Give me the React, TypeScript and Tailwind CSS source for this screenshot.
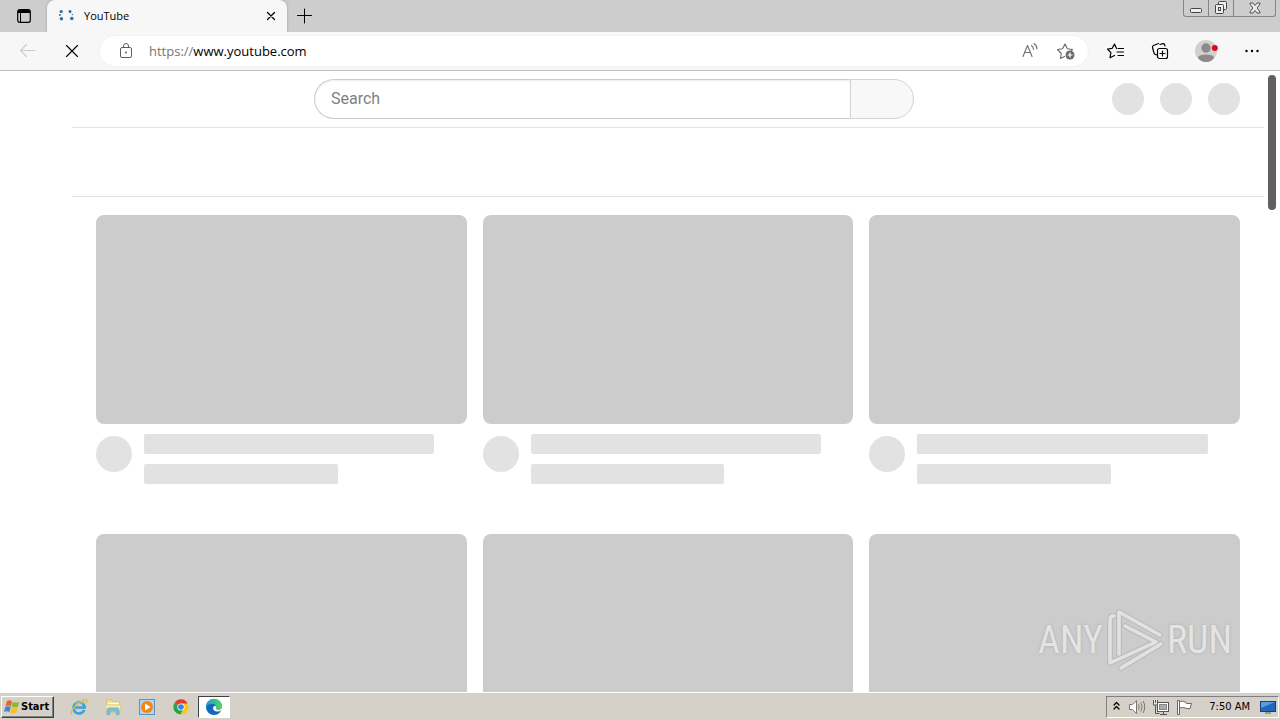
import type { ReactNode } from 'react';

const line = { fill: 'none', stroke: 'currentColor', strokeLinecap: 'round', strokeLinejoin: 'round' } as const;

function IconButton({ label, className = '', children }: { label: string; className?: string; children: ReactNode }) {
  return (
    <button type="button" aria-label={label} className={`flex shrink-0 items-center justify-center ${className}`}>
      {children}
    </button>
  );
}

function TabStrip() {
  return (
    <header className="flex h-8 shrink-0 bg-[#cdcdcd]">
      <IconButton label="Tab actions" className="w-[47px] rounded-br-md">
        <svg width="16" height="16" viewBox="0 0 16 16">
          <rect x="1.700" y="1.700" width="12.600" height="12.600" rx="2" {...line} strokeWidth="1.200" />
          <path d="M2 3.500Q2 2 3.500 2h9Q14 2 14 3.500V5H2z" />
          <path d="M4.500 5v9" {...line} strokeWidth="1" />
        </svg>
      </IconButton>
      <div className="flex w-60 items-center rounded-t-lg bg-[#f7f7f7] pr-2 pl-3 shadow-[0_0_3px_#a0a0a0]">
        <svg width="16" height="16" viewBox="0 0 16 16" fill="#2b6ea5" className="shrink-0">
          <circle cx="2.200" cy="3.500" r="1.600" />
          <circle cx=".9" cy="7" r="1" />
          <circle cx="2.400" cy="10.800" r="1.700" />
          <circle cx="11" cy="3.500" r="1.500" />
          <circle cx="13.300" cy="6.500" r=".7" />
          <circle cx="12.800" cy="10.500" r="1.800" />
        </svg>
        <span className="ml-[9px] flex-1 text-[11px] text-black">YouTube</span>
        <IconButton label="Close tab" className="size-4">
          <svg width="10" height="10" viewBox="0 0 10 10">
            <path d="M1.500 1.500l7 7M8.500 1.500l-7 7" {...line} strokeWidth="1.300" />
          </svg>
        </IconButton>
      </div>
      <IconButton label="New tab" className="w-9">
        <svg width="16" height="16" viewBox="0 0 16 16">
          <path d="M7.500 1v14M.5 7.500h14" {...line} strokeWidth="1" />
        </svg>
      </IconButton>
      <div className="mr-1 ml-auto flex h-[17px] rounded-b-[3px] border border-t-0 border-[#858585] text-[#444]">
        <IconButton label="Minimize" className="w-[25px] border-r border-[#858585]">
          <svg width="12" height="12" viewBox="0 0 12 12">
            <rect x=".5" y="6.500" width="11" height="4" rx="1" fill="#eee" stroke="currentColor" />
          </svg>
        </IconButton>
        <IconButton label="Restore" className="w-[25px] border-r border-[#858585]">
          <svg width="14" height="14" viewBox="0 0 14 14" fill="#eee" stroke="currentColor">
            <rect x="4.500" y=".5" width="8" height="8" rx="1" />
            <rect x="1.500" y="3.500" width="8" height="9" rx="1" />
            <rect x="4.500" y="6.500" width="2" height="3" />
          </svg>
        </IconButton>
        <IconButton label="Close window" className="w-[41px]">
          <svg width="12" height="12" viewBox="0 0 12 12" fill="#eee" stroke="currentColor" strokeWidth=".9">
            <path d="M1 1h3l2 2.600L8 1h3v1L8 6l3 4v1H8L6 8.400 4 11H1v-1l3-4-3-4z" />
          </svg>
        </IconButton>
      </div>
    </header>
  );
}

function Toolbar() {
  return (
    <div className="flex h-[39px] shrink-0 items-center border-b border-[#bdbdbd] bg-[#f7f7f7] pr-1 pl-2 text-black">
      <IconButton label="Back" className="w-10 text-[#cccccc]">
        <svg width="18" height="16" viewBox="0 0 18 16">
          <path d="M7.500 1.500L1.500 7.500l6 6M1.500 7.500H16" {...line} strokeWidth="1.100" />
        </svg>
      </IconButton>
      <IconButton label="Stop loading" className="ml-1 w-10">
        <svg width="14" height="14" viewBox="0 0 14 14">
          <path d="M1.500 1.500l11 11M12.500 1.500l-11 11" {...line} strokeWidth="1.100" />
        </svg>
      </IconButton>
      <div className="ml-2 flex h-[30px] flex-1 items-center rounded-full bg-white pr-1 pl-[18px] shadow-[0_0_2px_#e8e8e8]">
        <svg width="16" height="18" viewBox="0 0 16 18" className="shrink-0 text-[#5f5f5f]">
          <rect x="2.500" y="5.500" width="11" height="10" rx="1.500" {...line} />
          <path d="M5.500 5.500V4a2.500 2.500 0 0 1 5 0v1.500" {...line} />
          <circle cx="8" cy="10.500" r="1" fill="currentColor" />
        </svg>
        <a href="https://www.youtube.com" className="ml-[15px] flex-1 pt-0.5 text-[13px] text-black">
          <span className="text-[#767676]">https://</span>www.youtube.com
        </a>
        <IconButton label="Read aloud" className="w-9 text-[#707070]">
          <svg width="18" height="18" viewBox="0 0 18 18">
            <path d="M2 14.500L6.500 3.500 11 14.500M3.500 10.500h6M10.500 3.500q2 1.500 2 4M13 1.500q3 2 3 5.500" {...line} strokeWidth="1.100" />
          </svg>
        </IconButton>
        <IconButton label="Add to favorites" className="w-9 text-[#6a6a6a]">
          <svg width="20" height="20" viewBox="0 0 20 20">
            <path d="M8.500 15.500l-4 2 .8-5L1.500 8.500l5-.8L9 3l2.300 4.700 5.200.8-1 1" {...line} strokeWidth="1.100" />
            <circle cx="14" cy="14" r="4.500" fill="currentColor" />
            <path d="M14 11.500v5M11.500 14h5" stroke="#fff" strokeWidth="1.200" />
          </svg>
        </IconButton>
      </div>
      <div className="ml-2 flex">
        <IconButton label="Favorites" className="w-10">
          <svg width="20" height="18" viewBox="0 0 20 18">
            <path d="M10.500 6.500L8.500 2 6.200 6.300 1.500 7l3.400 3.600L4 15.700l4.500-2.200M12 6.500h5.500M11 10h6.500M12 13.500h5.500" {...line} strokeWidth="1.200" />
          </svg>
        </IconButton>
        <IconButton label="Collections" className="w-12">
          <svg width="18" height="18" viewBox="0 0 18 18">
            <rect x="6.500" y="6.500" width="10" height="10" rx="2" {...line} strokeWidth="1.200" />
            <path d="M11.500 9v5M9 11.500h5M14 4l-.5-1.500Q13 1.500 12 1.700L9 2.500M4.500 12.500q-1-.2-1.500-1.500L1.500 5.500Q1.200 4 2.500 3.500L7.500 1.500M4.500 12.500L6 13" {...line} strokeWidth="1.200" />
          </svg>
        </IconButton>
        <IconButton label="Profile" className="w-11">
          <svg width="24" height="24" viewBox="0 0 24 24">
            <circle cx="12" cy="12" r="11" fill="#d3d1cf" />
            <circle cx="12" cy="9" r="4.700" fill="#8d8b89" />
            <path d="M4 19q0-3.500 8-3.500t8 3.500q-3 4-8 4t-8-4z" fill="#8d8b89" />
            <circle cx="20.800" cy="9" r="3" fill="#d90b1c" />
          </svg>
        </IconButton>
        <IconButton label="Settings and more" className="w-12">
          <svg width="14" height="4" viewBox="0 0 14 4">
            <circle cx="1.500" cy="2" r="1.200" />
            <circle cx="7" cy="2" r="1.200" />
            <circle cx="12.500" cy="2" r="1.200" />
          </svg>
        </IconButton>
      </div>
    </div>
  );
}

function VideoPlaceholder() {
  return (
    <div className="h-[319px]">
      <div className="aspect-[371/209] rounded-lg bg-[#cccccc]" />
      <div className="mt-[10px] flex gap-3">
        <div className="mt-0.5 size-9 shrink-0 rounded-full bg-[#e2e2e2]" />
        <div className="flex flex-1 flex-col gap-[10px]">
          <div className="h-5 w-[90%] rounded-xs bg-[#e2e2e2]" />
          <div className="h-5 w-3/5 rounded-xs bg-[#e2e2e2]" />
        </div>
      </div>
    </div>
  );
}

function Page() {
  return (
    <main className="relative min-h-0 flex-1 overflow-hidden bg-white">
      <div className="flex h-14 items-center pr-10 pl-[116px]">
        <form className="flex flex-1 justify-center" onSubmit={(e) => e.preventDefault()}>
          <input
            type="text"
            aria-label="Search"
            placeholder="Search"
            className="h-10 w-full max-w-[536px] rounded-l-full border border-r-0 border-[#cccccc] bg-white px-4 pb-0.5 font-[Roboto,sans-serif] text-base text-black shadow-[inset_0_1px_2px_#eeeeee] outline-none placeholder:text-[#808080]"
          />
          <button type="submit" aria-label="Submit search" className="h-10 w-16 shrink-0 rounded-r-full border border-[#d3d3d3] bg-[#f8f8f8]" />
        </form>
        <div className="flex gap-4">
          <div className="size-8 rounded-full bg-[#e2e2e2]" />
          <div className="size-8 rounded-full bg-[#e2e2e2]" />
          <div className="size-8 rounded-full bg-[#e2e2e2]" />
        </div>
      </div>
      <div className="mr-4 ml-[72px] h-[70px] border-y border-[#e2e2e2]" />
      <div className="grid grid-cols-3 gap-x-4 pt-[18px] pr-10 pl-24">
        {[0, 1, 2, 3, 4, 5].map((n) => (
          <VideoPlaceholder key={n} />
        ))}
      </div>
      <div className="absolute top-1 right-1 h-[135px] w-2 rounded-sm bg-[#606060]" />
      <Watermark />
    </main>
  );
}

function Watermark() {
  return (
    <div className="absolute right-12 bottom-5 flex items-center gap-0.5 font-['Roboto_Condensed','Liberation_Sans_Narrow',Roboto,sans-serif] text-[38px] leading-[64px] font-normal text-[#e4e4e4] [text-shadow:0_0_3px_#a8a8a8]">
      <span>ANY</span>
      <svg width="60" height="64" viewBox="0 0 60 64" className="shrink-0">
        <g {...line} strokeWidth="6" stroke="#bdbdbd">
          <path d="M9 8q-4 0-4 4v43l46-21L20 18" />
          <path d="M14 46V4l41 23" />
          <path d="M16 60l40-24" />
        </g>
        <g {...line} strokeWidth="3.500" stroke="#e2e2e2">
          <path d="M9 8q-4 0-4 4v43l46-21L20 18" />
          <path d="M14 46V4l41 23" />
          <path d="M16 60l40-24" />
        </g>
      </svg>
      <span>RUN</span>
    </div>
  );
}

function Taskbar() {
  return (
    <footer className="flex h-7 shrink-0 items-center border-t border-white bg-[#d5d0c8] pt-px pr-px pl-px text-[11px] text-black">
      <button type="button" className="flex h-[22px] w-[53px] items-center gap-px border border-t-white border-r-[#404040] border-b-[#404040] border-l-white pl-0.5 font-['DejaVu_Sans_Condensed','DejaVu_Sans',sans-serif] font-bold shadow-[inset_-1px_-1px_#808080]">
        <svg width="16" height="16" viewBox="0 0 16 16" className="shrink-0">
          <path d="M3 2q3-1.500 5 .3L6.800 7.200Q4.500 5.700 1.600 7z" fill="#e8642c" />
          <path d="M8.700 2.700q2.800 1.700 6.600 0L13.900 7.700Q10.500 9 7.500 7.500z" fill="#86b83b" />
          <path d="M1.400 7.800Q4.500 6.500 6.600 8L5.300 13.200Q3 11.700 0 12.900z" fill="#3c88cf" />
          <path d="M7.300 8.300q2.900 1.500 6.400.1L12.300 13.700q-3 1.400-6.300-.1z" fill="#f6bd2d" />
        </svg>
        Start
      </button>
      <IconButton label="Internet Explorer" className="ml-2 h-[22px] w-[34px]">
        <svg width="18" height="18" viewBox="0 0 18 18" fill="none">
          <path d="M14.300 12A5.600 5.600 0 1 1 14.700 9.500H5" stroke="#3aa3dc" strokeWidth="2.600" />
          <path d="M5 6.800A5 5 0 0 1 13 6" stroke="#8fd4f3" strokeWidth="1" />
          <path d="M2 16.500Q-.5 14 6 7.500 14 .5 16.500 2q1 .8-.5 3.500" stroke="#e3bd45" strokeWidth="1.400" />
        </svg>
      </IconButton>
      <IconButton label="File Explorer" className="h-[22px] w-[34px]">
        <svg width="18" height="18" viewBox="0 0 18 18">
          <path d="M2.500 1.500h5l1 2h7v11h-13z" fill="#f0dc92" stroke="#d8bd6a" strokeWidth=".7" />
          <path d="M4 5.500h11" stroke="#fffbe0" strokeWidth="1.500" />
          <path d="M1.500 7h15v6.500h-15z" fill="#f7e8ae" stroke="#dcc67a" strokeWidth=".6" />
          <path d="M3 16.500V12q0-2 2-2h8q2 0 2 2v4.500h-2.700V13H5.700v3.500z" fill="#7cc3dc" stroke="#529fbd" strokeWidth=".6" />
        </svg>
      </IconButton>
      <IconButton label="Media Player" className="h-[22px] w-[34px]">
        <svg width="18" height="18" viewBox="0 0 18 18">
          <rect x="1.500" y="1.500" width="15" height="15" fill="#b5d3ec" stroke="#5b93c5" />
          <circle cx="9" cy="9" r="6" fill="#f08519" />
          <path d="M7 5.500L12.500 9 7 12.500z" fill="#fff" />
        </svg>
      </IconButton>
      <IconButton label="Chrome" className="h-[22px] w-[34px]">
        <svg width="16" height="16" viewBox="0 0 16 16">
          <path d="M8 8L1.500 4A7.500 7.500 0 0 1 14.700 4.500z" fill="#e33b2e" />
          <path d="M8 8L1.500 4A7.500 7.500 0 0 0 7.500 15.500L11 9.500z" fill="#2ba24c" />
          <path d="M8 4.500h6.700A7.500 7.500 0 0 1 7.500 15.500L11.200 9z" fill="#fbc816" />
          <circle cx="8" cy="8" r="3.600" fill="#fff" />
          <circle cx="8" cy="8" r="2.800" fill="#3c7de6" />
        </svg>
      </IconButton>
      <IconButton label="Edge" className="h-[22px] w-8 border border-t-[#404040] border-r-white border-b-white border-l-[#404040] bg-white">
        <svg width="18" height="18" viewBox="0 0 18 18">
          <defs>
            <linearGradient id="edge-top" x1="0" x2="1">
              <stop offset="0" stopColor="#1b9de2" />
              <stop offset="1" stopColor="#5ed34f" />
            </linearGradient>
          </defs>
          <circle cx="9" cy="9" r="8" fill="#1368bd" />
          <path d="M1 9a8 8 0 0 1 16-.5q0 3.500-3.500 3.500-3 0-2.500-1.500Q12 7 8.500 6 4 5 1 9z" fill="url(#edge-top)" />
          <path d="M11 8q-3-.5-3 2 .5 3.500 4.500 3.500 2 0 4-1.500l1.500 0V9.500L16 11q-2 1.500-4 .8-1.600-.5-.8-1.700z" fill="#fff" />
        </svg>
      </IconButton>
      <div className="ml-auto flex h-[22px] items-center border border-t-[#808080] border-r-white border-b-white border-l-[#808080] pl-1">
        <IconButton label="Show hidden icons" className="w-2.5">
          <svg width="7" height="12" viewBox="0 0 7 12">
            <path d="M1 4l2.500-2.500L6 4M1 8l2.500-2.500L6 8" {...line} strokeWidth="1.300" />
          </svg>
        </IconButton>
        <IconButton label="Volume" className="ml-1 w-6">
          <svg width="18" height="16" viewBox="0 0 18 16" fill="none" stroke="#777">
            <path d="M1.500 5.500h3l4-4v13l-4-4h-3z" fill="#fff" />
            <path d="M10.500 5.500q1.500 2.500 0 5M12.700 3.500q3 4.500 0 9M15 2q3.500 6 0 12" />
          </svg>
        </IconButton>
        <IconButton label="Network" className="w-6">
          <svg width="18" height="17" viewBox="0 0 18 17" stroke="#555">
            <rect x="5.500" y="3.500" width="11" height="9" fill="#fff" />
            <rect x="7.500" y="5.500" width="7" height="5" fill="#aaa" stroke="#888" />
            <path d="M8 15.500h7M11.500 13v2M3.500 6.500v8h4" fill="none" />
            <path d="M1.500 1v5h4V1M3.500 1v3" fill="#eee" />
          </svg>
        </IconButton>
        <IconButton label="Action Center" className="w-6">
          <svg width="18" height="16" viewBox="0 0 18 16" fill="#fff" stroke="#666">
            <path d="M3.500 2.500q3-1 6 .5l1 1.500h5l-1.500 5q-3 .5-5-.5t-5.500 0" />
            <path d="M1.500 1.500h2v14h-2z" />
          </svg>
        </IconButton>
        <time className="ml-3 font-['DejaVu_Sans_Condensed','DejaVu_Sans',sans-serif] whitespace-nowrap">7:50 AM</time>
        <IconButton label="Show desktop" className="ml-2 w-5">
          <svg width="16" height="14" viewBox="0 0 16 14">
            <rect x=".5" y="1.500" width="15" height="10" fill="#2467ba" stroke="#173f79" />
            <path d="M1 2h14L1 8z" fill="#5b9be0" />
            <path d="M5 13h6" stroke="#476" />
          </svg>
        </IconButton>
      </div>
    </footer>
  );
}

export default function App() {
  return (
    <div className="flex h-screen flex-col overflow-hidden font-['Open_Sans','Noto_Sans',sans-serif]">
      <TabStrip />
      <Toolbar />
      <Page />
      <Taskbar />
    </div>
  );
}
